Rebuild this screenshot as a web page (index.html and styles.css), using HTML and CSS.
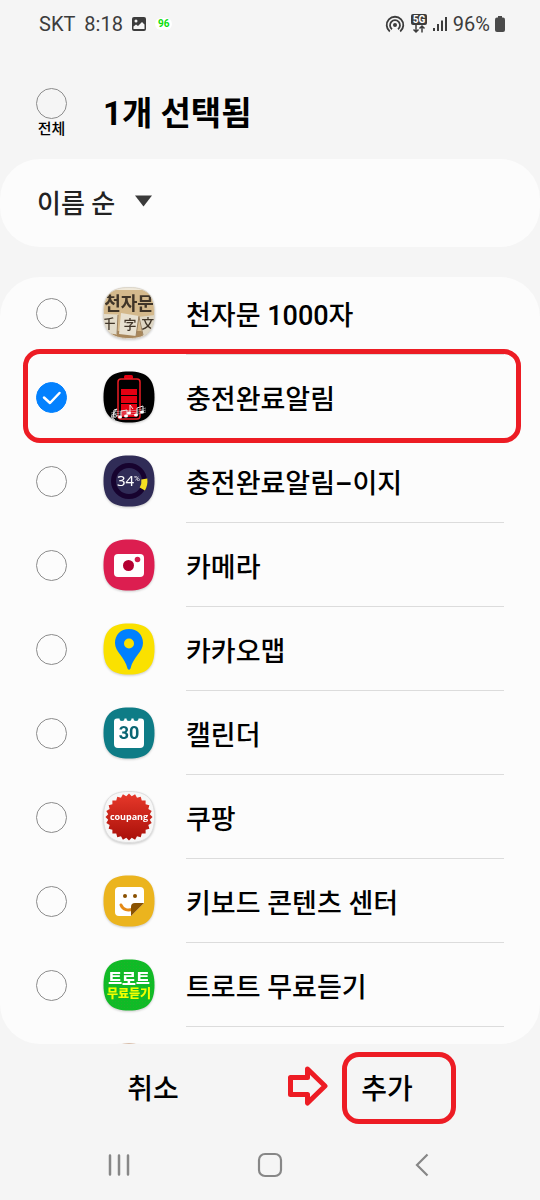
FILE: index.html
```html
<!DOCTYPE html>
<html lang="ko">
<head>
<meta charset="utf-8">
<meta name="viewport" content="width=device-width, initial-scale=1">
<title>앱 선택</title>
<link rel="stylesheet" href="styles.css">
</head>
<body>
<svg class="defs" aria-hidden="true">
  <defs>
    <path id="tile" d="M26 .5C44 .5 51.500 8 51.500 26S44 51.500 26 51.500.5 44 .5 26 8 .5 26 .5z"/>
    <clipPath id="tile-clip"><use href="#tile"/></clipPath>
    <linearGradient id="seal" x1="0" y1="0" x2="0" y2="1"><stop offset="0" stop-color="#e8392b"/><stop offset="1" stop-color="#a80f08"/></linearGradient>
    <clipPath id="seal-clip">
      <path d="M26 2.500 49.500 26 26 49.500 2.500 26z"/>
      <path d="M26 2.500 49.500 26 26 49.500 2.500 26z" transform="rotate(15 26 26)"/>
      <path d="M26 2.500 49.500 26 26 49.500 2.500 26z" transform="rotate(30 26 26)"/>
      <path d="M26 2.500 49.500 26 26 49.500 2.500 26z" transform="rotate(45 26 26)"/>
      <path d="M26 2.500 49.500 26 26 49.500 2.500 26z" transform="rotate(60 26 26)"/>
      <path d="M26 2.500 49.500 26 26 49.500 2.500 26z" transform="rotate(75 26 26)"/>
    </clipPath>
    <pattern id="dots" width="3" height="3" patternUnits="userSpaceOnUse"><rect width="3" height="3" fill="#0fbb26"/><rect width="1" height="1" fill="#25ad2c"/></pattern>
  </defs>
</svg>
<div class="screen">
  <div class="status">
    <div class="status-side status-left">
      <span class="carrier">SKT</span>
      <span class="clock">8:18</span>
      <svg width="14" height="14" viewBox="0 0 14 14"><rect width="14" height="14" rx="2" fill="#3c3c3c"/><path d="M1.500 12V9.500L4 7.500l2 1.500 4-4 2.500 2.500V12z" fill="#f5f5f5"/><circle cx="4" cy="4" r="1.500" fill="#f5f5f5"/></svg>
      <span class="pill">96</span>
    </div>
    <div class="status-side">
      <svg width="20" height="18" viewBox="0 0 20 18" fill="none" stroke="#3c3c3c" stroke-width="1.800"><circle cx="10" cy="10" r="2" fill="#3c3c3c" stroke="none"/><path d="M7 14.200A5 5 0 1 1 13 14.200M4.800 16.500A8.300 8.300 0 1 1 15.200 16.500"/></svg>
      <svg class="net" width="18" height="20" viewBox="0 0 18 20"><rect x="1" width="16" height="11" rx="2" fill="#3c3c3c"/><text x="9" y="9" text-anchor="middle" class="net-text">5G</text><path d="M6 11v7M3.500 15.500 6 18l2.500-2.500M12 18.500V12M9.500 14.500 12 12l2.500 2.500" fill="none" stroke="#3c3c3c" stroke-width="1.500"/></svg>
      <svg width="15" height="16" viewBox="0 0 15 16" fill="#3c3c3c"><rect x="0" y="12" width="2" height="3"/><rect x="4" y="8" width="2" height="7"/><rect x="8" y="4.500" width="2" height="10.500"/><rect x="12" y="1" width="2" height="14"/></svg>
      <span class="percent">96%</span>
      <svg width="10" height="16" viewBox="0 0 10 16" fill="#4a4a4a"><rect x="3" width="4" height="3"/><rect y="1.500" width="10" height="14.500" rx="2"/></svg>
    </div>
  </div>

  <header class="header">
    <label class="all"><input type="checkbox" class="check"><span>전체</span></label>
    <h1 class="title">1개 선택됨</h1>
  </header>

  <button class="sort" type="button"><span>이름 순</span><svg width="17" height="12" viewBox="0 0 17 12"><path d="M0 .5h17L8.500 11.500z" fill="#3a3a3a"/></svg></button>

  <main class="card">
    <label class="row"><input type="checkbox" class="check">
      <svg class="icon" viewBox="0 0 52 52"><g clip-path="url(#tile-clip)"><rect width="52" height="52" fill="#d4b98c"/><path d="M0 0h52v3H0z" fill="#f0e9da"/><path d="M0 44h52v8H0z" fill="#a8875b"/><path d="m0 27 15 .5-1 20-14-2z" fill="#e3dccb"/><path d="m18 26 18 3-3 20-17-2z" fill="#e8e1d1"/><path d="m35 30 17-2v20l-12 1z" fill="#ded6c3"/><path d="m15 28-1 19M36 29l-3 20M36 30l4 18" stroke="#9b8160" fill="none"/><text x="26" y="23" text-anchor="middle" class="ink ink-title">천자문</text><text x="6" y="41" text-anchor="middle" class="ink">千</text><text x="27" y="42" text-anchor="middle" class="ink">字</text><text x="45" y="41" text-anchor="middle" class="ink">文</text></g><use href="#tile" fill="none" stroke="#dcd7cd"/></svg>
      <span class="name">천자문 1000자</span></label>
    <label class="row marked"><input type="checkbox" class="check" checked>
      <svg class="tick" viewBox="0 0 31 31"><path d="m8 15.500 6 5.500 9.500-10" fill="none" stroke="#fff" stroke-width="2.500" stroke-linecap="round" stroke-linejoin="round"/></svg>
      <svg class="icon" viewBox="0 0 52 52"><use href="#tile" fill="#000"/><rect x="21" y="4" width="9" height="4" rx="1.500" fill="#e50012"/><rect x="15" y="8" width="22" height="40" rx="3" fill="none" stroke="#ed1c24" stroke-width="1.500"/><path d="M18 18h16v6H18zm0 7h16v7H18zm0 8h16v13H18z" fill="#e50012"/><g fill="none" stroke="#e8e8e8"><path stroke-width=".5" d="M8 42c12-4 20 0 35-5M8 44c12-4 20 0 35-5M8 46c12-4 20 0 35-5"/><path d="M12 49c-5-2-4-6 0-6 3 1 2 4-1 3M10 48l1-9 3-1-4 5M18 46v-6l6-1v6M27 42v-8l3 4M34 44v-7l6-2v6"/></g><g fill="#fff"><ellipse cx="17" cy="46" rx="2" ry="1.500"/><ellipse cx="23" cy="45" rx="2" ry="1.500"/><ellipse cx="26" cy="42" rx="2" ry="1.500"/><ellipse cx="33" cy="44" rx="2" ry="1.500"/><ellipse cx="39" cy="41" rx="2" ry="1.500"/></g></svg>
      <span class="name">충전완료알림</span></label>
    <label class="row"><input type="checkbox" class="check">
      <svg class="icon" viewBox="0 0 52 52"><use href="#tile" fill="#302c57"/><circle cx="26" cy="26" r="15.500" fill="none" stroke="#17032f" stroke-width="5"/><path d="M41.300 24A15.500 15.500 0 0 1 39.300 34" fill="none" stroke="#f4df22" stroke-width="6"/><text x="14" y="31" class="gauge">34</text><text x="31" y="26" class="gauge-unit">%</text></svg>
      <span class="name">충전완료알림–이지</span></label>
    <label class="row"><input type="checkbox" class="check">
      <svg class="icon" viewBox="0 0 52 52"><use href="#tile" fill="#dc1e50"/><rect x="11" y="15" width="30" height="23" rx="4" fill="#fff"/><circle cx="25.500" cy="26.500" r="5.500" fill="#b40031"/><circle cx="34.500" cy="20.500" r="2.800" fill="#d11d4c"/></svg>
      <span class="name">카메라</span></label>
    <label class="row"><input type="checkbox" class="check">
      <svg class="icon" viewBox="0 0 52 52"><use href="#tile" fill="#fae100"/><path d="M26 6C17.500 6 12 12 12 20c0 9 10 14 12.500 25.500Q26 48 27.500 45.500C30 34 40 29 40 20 40 12 34.500 6 26 6z" fill="#0080ff"/><circle cx="26" cy="20.500" r="5" fill="#fae100"/></svg>
      <span class="name">카카오맵</span></label>
    <label class="row"><input type="checkbox" class="check">
      <svg class="icon" viewBox="0 0 52 52"><use href="#tile" fill="#0e7c86"/><path d="M14 11.500h2.500a2.500 2.500 0 0 0 5 0h2a2.500 2.500 0 0 0 5 0h2a2.500 2.500 0 0 0 5 0H38q3 0 3 3V37q0 4-4 4H15q-4 0-4-4V14.500q0-3 3-3z" fill="#fff"/><text x="26" y="32" text-anchor="middle" class="date">30</text></svg>
      <span class="name">캘린더</span></label>
    <label class="row"><input type="checkbox" class="check">
      <svg class="icon" viewBox="0 0 52 52"><use href="#tile" fill="#f7f7f7" stroke="#dedede"/><rect x="2" y="2" width="48" height="48" fill="url(#seal)" clip-path="url(#seal-clip)"/><text x="26" y="29" text-anchor="middle" class="brand">coupang</text></svg>
      <span class="name">쿠팡</span></label>
    <label class="row"><input type="checkbox" class="check">
      <svg class="icon" viewBox="0 0 52 52"><use href="#tile" fill="#ebb41e"/><path d="M16 12h21q4 0 4 4v12L28 41H16q-4 0-4-4V16q0-4 4-4z" fill="#fff"/><circle cx="22" cy="21" r="2" fill="#8a5000"/><circle cx="32" cy="21" r="2" fill="#8a5000"/><path d="M18 30c2 5 7 6 12 4" fill="none" stroke="#e58a16" stroke-width="3" stroke-linecap="round"/><path d="M28 41V32q0-4 4-4h9z" fill="#8a5200"/></svg>
      <span class="name">키보드 콘텐츠 센터</span></label>
    <label class="row"><input type="checkbox" class="check">
      <svg class="icon" viewBox="0 0 52 52"><use href="#tile" fill="url(#dots)"/><text x="26" y="25" text-anchor="middle" class="trot">트로트</text><text x="26" y="39" text-anchor="middle" class="trot trot-sub">무료듣기</text></svg>
      <span class="name">트로트 무료듣기</span></label>
    <div class="row" aria-hidden="true"><span class="check"></span>
      <svg class="icon" viewBox="0 0 52 52"><use href="#tile" fill="#c08a62"/></svg></div>
  </main>

  <footer class="actions">
    <button type="button" class="action">취소</button>
    <button type="button" class="action boxed">추가
      <svg class="arrow" viewBox="0 0 40 40"><path d="M2.500 11.500h17V3L37 20 19.500 37v-8.500h-17z" fill="none" stroke="#ed1c24" stroke-width="5" stroke-linejoin="round"/></svg>
    </button>
  </footer>

  <nav class="nav">
    <button type="button" aria-label="최근 앱"><svg width="24" height="24" viewBox="0 0 24 24"><path d="M3 2.500v19M12 2.500v19M21 2.500v19" stroke="#878787" stroke-width="2.500" stroke-linecap="round"/></svg></button>
    <button type="button" aria-label="홈"><svg width="26" height="26" viewBox="0 0 26 26"><rect x="2" y="2" width="22" height="22" rx="6" fill="none" stroke="#878787" stroke-width="2.200"/></svg></button>
    <button type="button" aria-label="뒤로"><svg width="24" height="24" viewBox="0 0 24 24"><path d="M18.500 1.500 8 12l10.500 10.500" fill="none" stroke="#878787" stroke-width="2.200"/></svg></button>
  </nav>
</div>
</body>
</html>
```

FILE: styles.css
```css
* { box-sizing: border-box; }

body {
  margin: 0;
  background: #f5f5f5;
  color: #000;
  font-family: Roboto, "Noto Sans CJK KR", sans-serif;
  font-weight: 500;
}

button {
  border: 0;
  padding: 0;
  background: none;
  color: inherit;
  font: inherit;
}

svg { display: block; flex: none; }
.defs { position: absolute; width: 0; height: 0; }

.screen { display: flex; flex-direction: column; height: 100vh; }

.status {
  display: flex;
  justify-content: space-between;
  align-items: center;
  height: 48px;
  padding: 0 35px 0 39px;
  color: #3c3c3c;
  font-size: 20px;
  font-weight: 400;
}
.status-side { display: flex; align-items: center; gap: 5px; }
.status-left { gap: 9px; }
.pill {
  padding: 0 3px;
  border-radius: 6px;
  background: #fff;
  color: #0be00b;
  font-size: 10px;
  font-weight: 700;
  line-height: 12px;
}
.net-text { fill: #fff; font-size: 10px; font-weight: 700; }

.header {
  display: flex;
  align-items: center;
  gap: 36px;
  height: 111px;
  padding: 20px 36px 0;
}
.all { display: flex; flex-direction: column; align-items: center; width: 31px; font-size: 15px; line-height: 20px; white-space: nowrap; }
.title { margin: 0; font-size: 33px; font-weight: 700; line-height: 40px; }

.check {
  appearance: none;
  flex: none;
  width: 31px;
  height: 31px;
  margin: 0;
  border: 1px solid #8c8c8c;
  border-radius: 50%;
}
.check:checked { border-color: #0381fe; background: #0381fe; }

.sort {
  display: flex;
  flex: none;
  align-items: center;
  gap: 20px;
  height: 88px;
  padding: 0 37px 4px;
  border-radius: 40px;
  background: #fcfcfc;
  color: #222;
  font-size: 26px;
}

.card {
  flex: 1;
  min-height: 0;
  margin-top: 30px;
  overflow: hidden;
  border-radius: 40px;
  background: #fcfcfc;
}
.row {
  position: relative;
  display: flex;
  align-items: center;
  height: 84px;
  padding: 0 36px;
}
.row:first-child { margin-top: -6px; }
.icon { width: 52px; height: 52px; margin: 0 31px 0 36px; filter: drop-shadow(0 1px 1px #0003); }
.name {
  display: flex;
  flex: 1;
  align-items: center;
  height: 84px;
  padding-top: 2px;
  border-bottom: 1px solid #dcdcdc;
  font-size: 27px;
  white-space: nowrap;
}
.tick { position: absolute; left: 36px; width: 31px; height: 31px; }
.marked .name { border-color: transparent; }
.marked::after {
  content: "";
  position: absolute;
  inset: -6px 19px -4px 23px;
  border: 5px solid #ed1c24;
  border-radius: 17px;
}

.ink { fill: #403528; font-family: "Noto Sans CJK KR", sans-serif; font-size: 13px; }
.ink-title { font-size: 18px; font-weight: 700; }
.gauge { fill: #fff; font-family: "Noto Sans", sans-serif; font-size: 15px; font-weight: 400; }
.gauge-unit { fill: #fff; font-size: 8px; font-weight: 400; }
.date { fill: #0b6673; font-size: 18px; font-weight: 700; }
.brand { fill: #fff; font-family: "Open Sans", sans-serif; font-size: 9px; font-weight: 700; }
.trot { fill: #fff; font-size: 15px; font-weight: 900; }
.trot-sub { fill: #f4ff00; font-size: 12px; }

.actions {
  display: grid;
  grid-template-columns: 1fr 1fr;
  flex: none;
  height: 86px;
  padding: 0 36px;
}
.action { position: relative; font-size: 28px; }
.boxed::after {
  content: "";
  position: absolute;
  inset: 8px 48px 6px 72px;
  border: 5px solid #ed1c24;
  border-radius: 17px;
}
.arrow { position: absolute; left: 18px; top: 22px; width: 40px; height: 40px; }

.nav {
  display: grid;
  grid-template-columns: repeat(3, 1fr);
  flex: none;
  height: 70px;
  padding: 0 44px;
}
.nav button { display: flex; align-items: center; justify-content: center; }
```
